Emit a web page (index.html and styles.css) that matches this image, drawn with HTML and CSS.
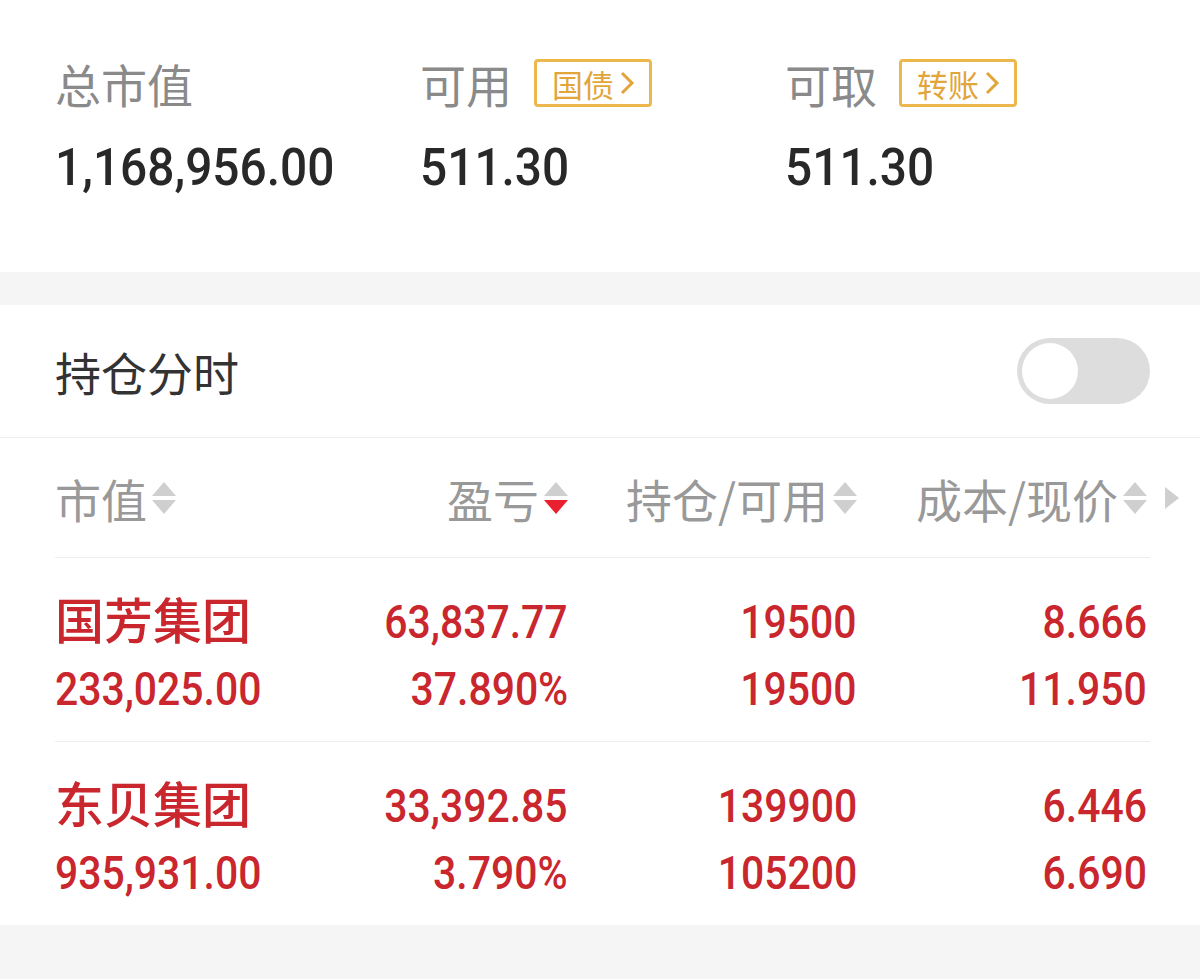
FILE: index.html
```html
<!DOCTYPE html>
<html lang="zh-CN">
<head>
  <meta charset="UTF-8">
  <title>持仓</title>
  <link rel="stylesheet" href="styles.css">
</head>
<body>

  <!-- Account summary -->
  <div class="summary">
    <div class="stat">
      <div class="stat-label">总市值</div>
      <div class="stat-value"><span class="num">1,168,956.00</span></div>
    </div>
    <div class="stat">
      <div class="stat-label">可用
        <span class="tag">国债<svg width="16" height="26" viewBox="0 0 16 26"><path d="M3 3 L13 13 L3 23" fill="none" stroke="currentColor" stroke-width="3"/></svg></span>
      </div>
      <div class="stat-value"><span class="num">511.30</span></div>
    </div>
    <div class="stat">
      <div class="stat-label">可取
        <span class="tag">转账<svg width="16" height="26" viewBox="0 0 16 26"><path d="M3 3 L13 13 L3 23" fill="none" stroke="currentColor" stroke-width="3"/></svg></span>
      </div>
      <div class="stat-value"><span class="num">511.30</span></div>
    </div>
  </div>

  <div class="band"></div>

  <!-- Switch -->
  <div class="switch-row">
    <span class="switch-title">持仓分时</span>
    <span class="toggle"><span class="knob"></span></span>
  </div>

  <!-- Holdings table -->
  <div class="holdings">
    <div class="head">
      <div class="th left">市值<svg class="sort" viewBox="0 0 24 36"><path d="M0 16 L12 2 L24 16 Z" fill="#cfcfcf"/><path d="M0 20 L12 34 L24 20 Z" fill="#cfcfcf"/></svg></div>
      <div class="th">盈亏<svg class="sort" viewBox="0 0 24 36"><path d="M0 16 L12 2 L24 16 Z" fill="#cfcfcf"/><path d="M0 20 L12 34 L24 20 Z" fill="#e8202f"/></svg></div>
      <div class="th">持仓/可用<svg class="sort" viewBox="0 0 24 36"><path d="M0 16 L12 2 L24 16 Z" fill="#cfcfcf"/><path d="M0 20 L12 34 L24 20 Z" fill="#cfcfcf"/></svg></div>
      <div class="th">成本/现价<svg class="sort" viewBox="0 0 24 36"><path d="M0 16 L12 2 L24 16 Z" fill="#cfcfcf"/><path d="M0 20 L12 34 L24 20 Z" fill="#cfcfcf"/></svg></div>
      <div class="more"><svg width="14" height="22" viewBox="0 0 14 22"><path d="M0 0 L14 11 L0 22 Z" fill="#cfcfcf"/></svg></div>
    </div>

    <div class="row">
      <div class="cell left">
        <div class="name">国芳集团</div>
        <div><span class="num">233,025.00</span></div>
      </div>
      <div class="cell">
        <div><span class="num">63,837.77</span></div>
        <div><span class="num">37.890%</span></div>
      </div>
      <div class="cell">
        <div><span class="num">19500</span></div>
        <div><span class="num">19500</span></div>
      </div>
      <div class="cell">
        <div><span class="num">8.666</span></div>
        <div><span class="num">11.950</span></div>
      </div>
    </div>

    <div class="row">
      <div class="cell left">
        <div class="name">东贝集团</div>
        <div><span class="num">935,931.00</span></div>
      </div>
      <div class="cell">
        <div><span class="num">33,392.85</span></div>
        <div><span class="num">3.790%</span></div>
      </div>
      <div class="cell">
        <div><span class="num">139900</span></div>
        <div><span class="num">105200</span></div>
      </div>
      <div class="cell">
        <div><span class="num">6.446</span></div>
        <div><span class="num">6.690</span></div>
      </div>
    </div>
  </div>

  <div class="band bottom"></div>

</body>
</html>
```

FILE: styles.css
```css
body {
  margin: 0;
  padding: 0;
  background: #ffffff;
  font-family: "Noto Sans CJK SC", sans-serif;
  width: 1200px;
}

.num {
  display: inline-block;
  font-family: Roboto, "Noto Sans CJK SC", sans-serif;
  font-weight: 500;
}

/* summary */

.summary {
  display: flex;
  height: 272px;
  padding-left: 55px;
  box-sizing: border-box;
}

.stat {
  width: 365px;
}

.stat-label {
  display: flex;
  align-items: center;
  margin-top: 59px;
  height: 48px;
  line-height: 48px;
  font-size: 46px;
  color: #8a8a8a;
}

.tag {
  display: inline-flex;
  align-items: center;
  box-sizing: border-box;
  height: 48px;
  margin-left: 22px;
  padding: 0 14px 0 15px;
  border: 3px solid #ecb84c;
  border-radius: 4px;
  font-size: 31px;
  line-height: 1;
  color: #e2a53a;
}

.tag svg {
  margin-left: 5px;
}

.stat-value {
  margin-top: 26px;
  height: 60px;
  line-height: 60px;
  font-size: 52px;
  color: #282828;
}

.stat-value .num {
  transform: scaleX(0.92);
  transform-origin: left center;
}

.band {
  height: 33px;
  background: #f5f5f5;
}

.band.bottom {
  height: 54px;
}

/* switch */

.switch-row {
  display: flex;
  justify-content: space-between;
  align-items: center;
  height: 132px;
  padding: 0 50px 0 55px;
  border-bottom: 1px solid #eeeeee;
}

.switch-title {
  font-size: 46px;
  color: #333;
}

.toggle {
  display: flex;
  align-items: center;
  width: 133px;
  height: 66px;
  padding: 0 5px;
  box-sizing: border-box;
  border-radius: 33px;
  background: #dddddd;
}

.knob {
  width: 56px;
  height: 56px;
  border-radius: 50%;
  background: #ffffff;
}

/* holdings */

.holdings {
  margin: 0 50px 0 55px;
}

.head,
.row {
  display: grid;
  grid-template-columns: 245px 268px 289px 290px 3px;
}

.head {
  height: 119px;
  align-items: center;
  border-bottom: 1px solid #eeeeee;
}

.th {
  display: flex;
  align-items: center;
  justify-content: flex-end;
  font-size: 46px;
  color: #999;
}

.th.left {
  justify-content: flex-start;
}

.sort {
  width: 24px;
  height: 36px;
  margin-left: 5px;
  flex-shrink: 0;
}

.more {
  margin-left: 18px;
}

.more svg {
  display: block;
}

.row {
  padding: 26px 0 23px;
  border-bottom: 1px solid #eeeeee;
}

.row:last-child {
  border-bottom: none;
}

.cell {
  text-align: right;
  color: #c9262e;
  font-size: 47px;
}

.cell > div {
  height: 67px;
  line-height: 67px;
}

.cell .num {
  transform: scaleX(0.87);
  transform-origin: right center;
}

.cell.left {
  text-align: left;
}

.cell.left .num {
  transform-origin: left center;
}

.name {
  font-size: 49px;
  font-weight: 500;
}
```
